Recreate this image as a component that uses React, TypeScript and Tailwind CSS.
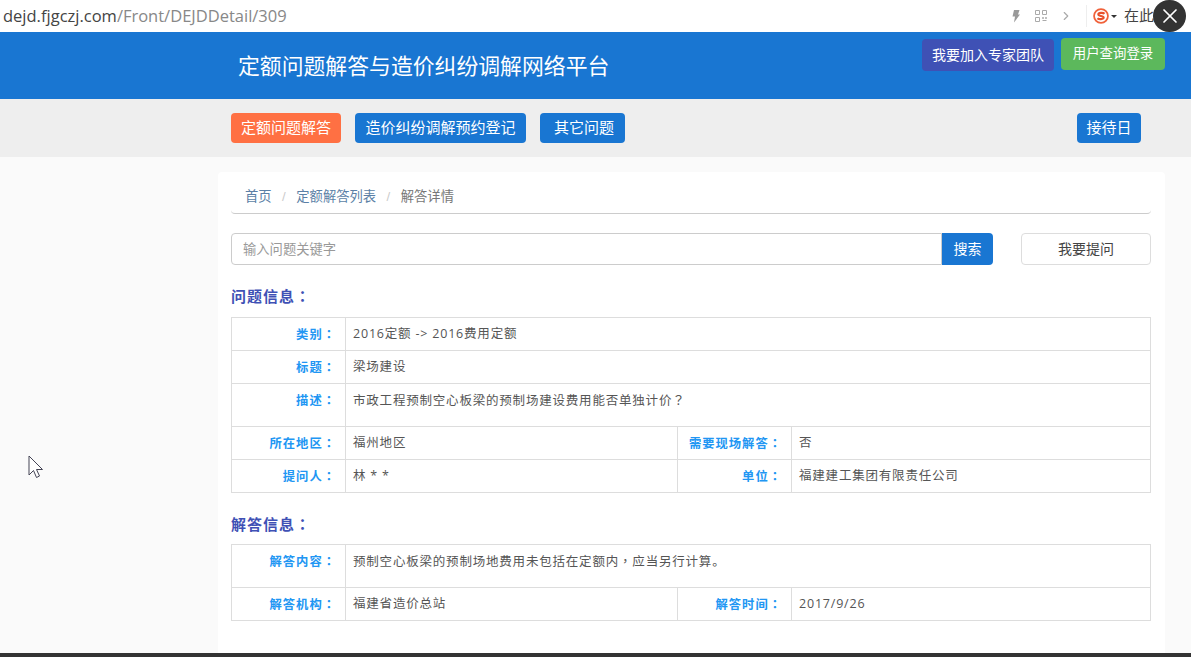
import { ChevronRight, X } from 'lucide-react';
import type { ReactNode } from 'react';

const FONT = "font-['Liberation_Sans','Noto_Sans_CJK_SC',sans-serif]";

// TC font centres full-width punctuation in its box, like the reference
function P({ children }: { children: ReactNode }) {
  return <span className="font-['Noto_Sans_CJK_TC',sans-serif]">{children}</span>;
}

function NavBtn({ children, className }: { children: ReactNode; className: string }) {
  return <button className={`h-[30px] rounded-[4px] text-[15px] text-white ${className}`}>{children}</button>;
}

function Label({ children, first }: { children: ReactNode; first?: boolean }) {
  return (
    <div className={`shrink-0 border-[#ddd] pr-[9px] pt-[7px] text-right text-[12.300px] font-bold tracking-[1px] text-[#2196f3] ${first ? 'w-[115px] border-x' : 'w-[114px] border-r'}`}>
      {children}
      <P>：</P>
    </div>
  );
}

function Value({ children, half }: { children: ReactNode; half?: boolean }) {
  return (
    <div className={`pl-[7px] pt-[7px] font-['Open_Sans','Noto_Sans_CJK_SC',sans-serif] text-[12.500px] tracking-[0.8px] text-[#555] ${half ? 'w-[332px] shrink-0 border-r border-[#ddd]' : 'flex-1'}`}>
      {children}
    </div>
  );
}

function Row({ h, children }: { h: string; children: ReactNode }) {
  return <div className={`flex border-b border-[#ddd] leading-[18px] ${h}`}>{children}</div>;
}

function Heading({ children }: { children: ReactNode }) {
  return (
    <h2 className="h-[20px] text-[15px] font-bold leading-[20px] tracking-[1px] text-[#3f51b5]">
      {children}
      <P>：</P>
    </h2>
  );
}

export default function App() {
  return (
    <div className={`relative flex h-[657px] flex-col overflow-hidden bg-[#fafafa] ${FONT}`}>
      {/* browser address bar */}
      <div className="flex h-[32px] shrink-0 items-center bg-white pl-[3px]">
        <span className="font-['Open_Sans',sans-serif] text-[16.500px] text-[#444]">
          dejd.fjgczj.com<span className="text-[#888]">/Front/DEJDDetail/309</span>
        </span>
        <div className="ml-auto flex items-center">
          <svg width="9" height="14" viewBox="0 0 9 14">
            <path d="M3 1h5.500L7 5.500h2L3 13.500l1-6H1.500z" fill="#999" />
          </svg>
          <svg width="12" height="12" viewBox="0 0 12 12" className="ml-[15px]" fill="none" stroke="#aaa">
            <path d="M.5.500h4v4h-4zM7.500.500h4v4h-4zM.5 7.500h4v4h-4zM7.500 7.500h1v1h-1zM10.500 7.500h1v1h-1zM7.500 10.500h4" />
          </svg>
          <ChevronRight size={14} className="ml-[12px] text-[#aaa]" />
          <div className="ml-[13px] h-[22px] border-l border-[#eee]" />
          <svg width="16" height="16" viewBox="0 0 18 18" className="ml-[6px]">
            <circle cx="9" cy="9" r="7.800" fill="#fff" stroke="#f0613a" strokeWidth="2" />
            <path d="M13 6.500C11.500 5 6 5 6 7.300 6 9.500 12 8.500 12 10.800 12 13 6.500 13 5 11.500" fill="none" stroke="#e8502a" strokeWidth="2.400" />
          </svg>
          <div className="ml-[2px] h-0 w-0 border-x-[3px] border-t-[3px] border-x-transparent border-t-[#333]" />
          <span className="ml-[7px] w-[67px] text-[15px] text-[#444]">在此</span>
        </div>
      </div>

      {/* header */}
      <header className="flex h-[67px] shrink-0 bg-[#1976d2] pl-[238px] pr-[26px]">
        <h1 className="mt-[19px] text-[21.850px] leading-[32px] text-white">定额问题解答与造价纠纷调解网络平台</h1>
        <div className="ml-auto flex items-start gap-[7px] pt-[6px]">
          <button className="mt-[1px] h-[32px] w-[132px] rounded-[4px] bg-[#3f51b5] text-[14px] text-white">我要加入专家团队</button>
          <button className="h-[32px] w-[104px] rounded-[4px] bg-[#5cb85c] text-[13.400px] text-white">用户查询登录</button>
        </div>
      </header>

      {/* nav */}
      <nav className="flex h-[58px] shrink-0 items-center gap-[14px] bg-[#eeeeee] pl-[231px] pr-[50px]">
        <NavBtn className="w-[110px] bg-[#ff7043]">定额问题解答</NavBtn>
        <NavBtn className="w-[171px] bg-[#1976d2]">造价纠纷调解预约登记</NavBtn>
        <NavBtn className="w-[85px] bg-[#1976d2] pl-[3px]">其它问题</NavBtn>
        <NavBtn className="ml-auto w-[64px] bg-[#1976d2]">接待日</NavBtn>
      </nav>

      {/* content card */}
      <main className="ml-[218px] mt-[15px] w-[947px] flex-1 rounded-t-[4px] bg-white px-[13px]">
        <div className="flex h-[42px] w-[920px] items-center gap-[10.500px] rounded-b-[4px] border-b border-[#ccc] pl-[14px] pt-[9px] text-[13.300px]">
          <span className="text-[#5b7fa6]">首页</span>
          <span className="text-[#ccc]">/</span>
          <span className="text-[#5b7fa6]">定额解答列表</span>
          <span className="text-[#ccc]">/</span>
          <span className="text-[#777]">解答详情</span>
        </div>

        <div className="mt-[19px] flex w-[920px]">
          <div className="flex h-[32px] w-[711px] items-center rounded-l-[4px] border border-[#ccc] pl-[11px] pt-[1px] text-[13.300px] text-[#999]">
            输入问题关键字
          </div>
          <button className="h-[32px] w-[51px] rounded-r-[4px] bg-[#1976d2] text-[14px] text-white">搜索</button>
          <button className="ml-auto h-[32px] w-[130px] rounded-[4px] border border-[#ddd] bg-white text-[14px] text-[#444]">我要提问</button>
        </div>

        <div className="mt-[21px]">
          <Heading>问题信息</Heading>
        </div>
        <div className="mt-[11px] w-[920px] border-t border-r border-[#ddd]">
          <Row h="h-[33px]">
            <Label first>类别</Label>
            <Value>2016定额 -&gt; 2016费用定额</Value>
          </Row>
          <Row h="h-[33px]">
            <Label first>标题</Label>
            <Value>梁场建设</Value>
          </Row>
          <Row h="h-[43px]">
            <Label first>描述</Label>
            <Value>
              市政工程预制空心板梁的预制场建设费用能否单独计价<P>？</P>
            </Value>
          </Row>
          <Row h="h-[33px]">
            <Label first>所在地区</Label>
            <Value half>福州地区</Value>
            <Label>需要现场解答</Label>
            <Value>否</Value>
          </Row>
          <Row h="h-[33px]">
            <Label first>提问人</Label>
            <Value half>林 * *</Value>
            <Label>单位</Label>
            <Value>福建建工集团有限责任公司</Value>
          </Row>
        </div>

        <div className="mt-[21px]">
          <Heading>解答信息</Heading>
        </div>
        <div className="mt-[10px] w-[920px] border-t border-r border-[#ddd]">
          <Row h="h-[43px]">
            <Label first>解答内容</Label>
            <Value>
              预制空心板梁的预制场地费用未包括在定额内<P>，</P>应当另行计算。
            </Value>
          </Row>
          <Row h="h-[33px]">
            <Label first>解答机构</Label>
            <Value half>福建省造价总站</Value>
            <Label>解答时间</Label>
            <Value>2017/9/26</Value>
          </Row>
        </div>
      </main>

      <div className="h-[4px] shrink-0 bg-[#333]" />

      {/* close button overlay */}
      <div className="absolute left-[1153px] top-0 flex h-[32px] w-[33px] items-center justify-center rounded-full bg-[#333]">
        <X size={24} strokeWidth={1.700} className="text-white" />
      </div>

      {/* mouse pointer */}
      <svg width="16" height="26" viewBox="0 0 16 26" className="absolute left-[28px] top-[455px]">
        <path d="M1 1v19l4.500-4.500 3 7 3-1.500-3-6.500h6z" fill="#fff" stroke="#445" strokeWidth="1" />
      </svg>
    </div>
  );
}
